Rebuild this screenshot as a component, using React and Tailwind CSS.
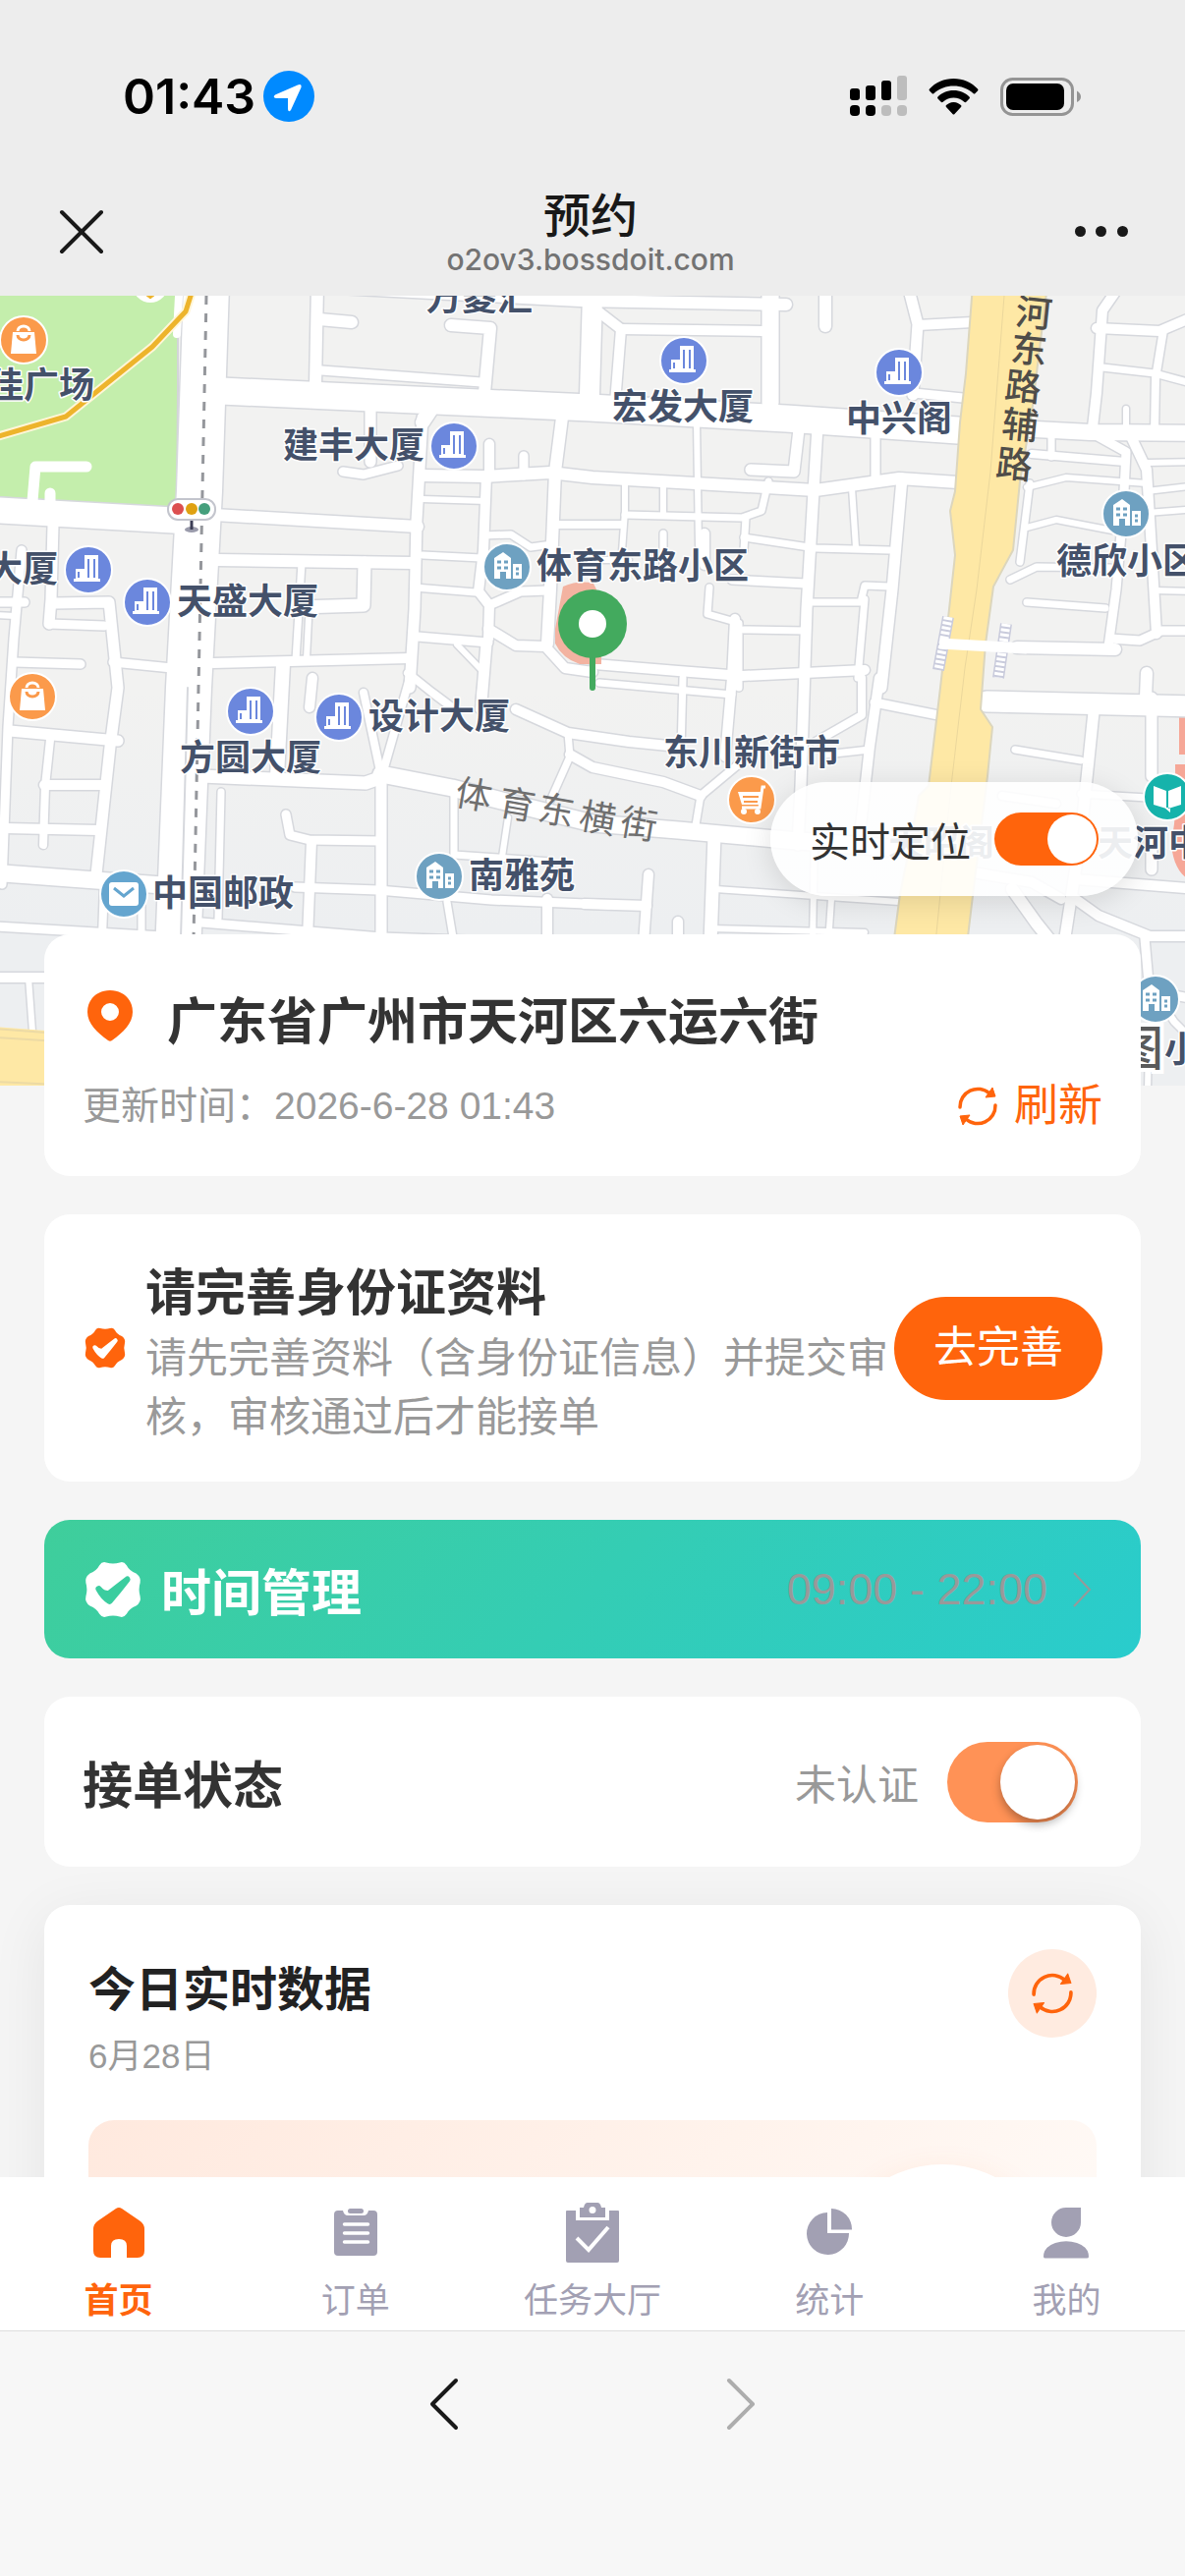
import React, { useState } from 'react';

const ROADS = [
  // main avenues
  [46, '210,290 203,500 192,700 181,970'],
  [26, '-10,519 185,530'],
  [27, '225,398 400,406 600,415 800,426 975,438'],
  [16, '1035,436 1110,440 1220,441'],
  [12, '218,524 425,536'],
  [12, '430,484 492,485 560,481 603,486 830,499 915,487 975,491'],
  [13, '205,790 372,797 392,790'],
  [17, '388,788 460,802 530,820 603,838 690,845 800,855 920,864'],
  [17, '-10,888 165,901'],
  // north blocks
  [12, '323,290 321,392'],
  [12, '325,325 358,328'],
  [12, '459,331 499,334 493,400'],
  [9, '327,377 490,389'],
  [12, '325,292 590,306 800,310'],
  [20, '603,300 600,402'],
  [10, '610,318 632,335'],
  [10, '632,335 776,337'],
  [10, '632,335 626,410'],
  [17, '784,300 784,410'],
  [12, '840,295 840,332'],
  [11, '925,295 934,330 929,402'],
  [10, '934,331 990,328'],
  [9, '930,400 980,405'],
  // centre blocks
  [11, '377,418 377,470'],
  [9, '349,480 370,483 405,474'],
  [14, '440,415 430,430'],
  [11, '430,425 424,530 422,620 417,700'],
  [8, '415,685 440,705 460,720'],
  [10, '498,452 498,484'],
  [9, '533,464 533,484'],
  [12, '572,425 565,480 560,600 557,655'],
  [6, '430,508 495,510'],
  [10, '495,484 492,560 487,602 498,616 497,650'],
  [9, '498,616 530,602 558,601'],
  [10, '497,640 525,657 555,658 575,680 603,684'],
  [7, '492,545 520,544 540,557 562,554'],
  [8, '565,534 632,534'],
  [7, '430,565 490,568'],
  [7, '422,598 484,603'],
  [9, '425,648 497,654'],
  [6, '465,656 490,682'],
  [11, '495,655 490,715'],
  [12, '222,570 420,573'],
  [7, '307,573 301,672'],
  [6, '314,630 312,670'],
  [13, '371,573 370,616 306,618'],
  [10, '217,675 417,670'],
  [14, '288,676 282,790'],
  [10, '318,690 315,720'],
  // west blocks
  [11, '54,534 52,610 50,635'],
  [11, '55,614 111,613 120,700 112,760 98,890'],
  [9, '50,635 106,637'],
  [9, '-5,613 25,613'],
  [6, '-5,626 15,627'],
  [9, '22,560 14,650 8,740 2,900'],
  [9, '15,674 82,676'],
  [9, '115,674 175,680'],
  [11, '10,744 120,754'],
  [8, '51,753 46,800 44,860'],
  [10, '45,799 105,799'],
  [10, '5,843 100,845'],
  [8, '106,900 104,953'],
  [7, '144,905 144,960'],
  [9, '-5,943 165,953'],
  [10, '-5,995 60,995'],
  [6, '29,995 33,1050'],
  // south blocks
  [7, '225,806 222,935'],
  [11, '388,790 388,958'],
  [9, '291,829 295,850 315,855 388,856'],
  [10, '317,856 313,955'],
  [9, '300,903 385,906 500,916 620,921'],
  [9, '205,939 388,954 560,960'],
  [7, '462,810 462,870 520,874 560,877'],
  [6, '517,832 511,872'],
  [7, '455,918 462,960'],
  [10, '557,915 557,960'],
  [8, '370,705 387,785'],
  [8, '417,690 390,785'],
  [10, '525,722 578,746 640,755 690,760'],
  [8, '490,700 488,722'],
  [7, '578,746 580,770 560,815'],
  [10, '580,768 603,781 675,796 713,810'],
  [8, '713,810 755,775'],
  [7, '713,810 708,840'],
  [7, '695,690 693,765'],
  [7, '610,695 745,707'],
  [10, '748,630 745,690 738,770'],
  [10, '895,690 885,760 875,850'],
  [8, '877,690 877,728 830,755'],
  [9, '890,715 960,729'],
  [7, '840,768 885,763'],
  [13, '727,850 723,960'],
  [6, '728,905 915,918'],
  [6, '723,945 880,949'],
  [6, '829,850 827,960'],
  [6, '846,915 843,960'],
  [10, '660,890 655,960'],
  [10, '595,920 658,922'],
  [10, '690,938 690,960'],
  // between the centre and the viaduct
  [6, '709,430 711,555'],
  [6, '636,490 636,520 632,575'],
  [6, '675,492 675,522'],
  [7, '636,524 755,527 775,520 782,490'],
  [7, '759,527 757,560'],
  [7, '757,547 830,558 905,560'],
  [11, '832,435 828,500 821,620 815,800 812,860'],
  [11, '918,487 908,600 897,700'],
  [9, '891,440 891,490'],
  [6, '867,497 871,557'],
  [11, '813,437 808,480 764,478'],
  [9, '745,590 820,594'],
  [7, '722,598 720,625 752,634 752,700'],
  [7, '757,641 820,642'],
  [7, '825,613 876,613 880,596 905,597'],
  [7, '880,610 873,690'],
  [10, '605,676 690,683 755,688 880,682'],
  [7, '675,543 675,575'],
  [10, '717,543 717,575'],
  [6, '600,570 640,570'],
  // east side
  [10, '1140,290 1122,316 1116,400 1112,435'],
  [10, '1116,334 1180,337 1220,320'],
  [8, '1184,336 1176,385 1175,440'],
  [7, '1122,374 1175,380 1220,392'],
  [6, '1146,416 1146,440'],
  [7, '1070,440 1070,465'],
  [8, '1050,462 1145,470'],
  [9, '1110,440 1146,460 1143,520 1136,600 1128,658'],
  [10, '1148,438 1167,478 1172,560 1177,645'],
  [6, '1167,471 1220,470'],
  [6, '1167,500 1220,494'],
  [6, '1167,522 1220,518'],
  [6, '1045,496 1085,486 1167,492'],
  [7, '1048,492 1038,572'],
  [6, '1045,537 1075,529 1132,540'],
  [7, '1028,590 1055,577 1130,578'],
  [7, '1045,613 1125,619'],
  [12, '1035,659 1135,661'],
  [9, '1130,650 1160,652 1182,642 1220,642'],
  [6, '1175,601 1220,602'],
  [12, '1167,685 1166,710'],
  [21, '1004,714 1220,719'],
  [11, '1113,725 1100,850 1083,960'],
  [7, '1033,763 1100,774'],
  [11, '1172,710 1172,790'],
  [11, '1172,860 1172,885'],
  [7, '1100,808 1220,815'],
  [8, '1020,810 1075,818'],
  [10, '990,888 1050,898 1080,915'],
  [12, '1030,905 1055,940 1075,965'],
  [10, '1094,895 1220,905'],
  [10, '1090,912 1118,932 1170,953 1220,953'],
  [9, '1165,955 1169,1000 1190,1012 1220,1018'],
  [7, '1175,1010 1195,1040 1215,1060'],
  [6, '1169,1060 1168,1110'],
];

const HIGHWAY =
  '990,290 983,380 977,430 972,500 967,520 972,565 966,620 957,700 945,800 935,810 928,850 916,910 908,970 983,970 989,920 1005,790 1010,740 998,722 1003,655 1011,597 1031,560 1038,490 1050,420 1066,290';

const LABELS = [
  ['万菱汇', 434, 316],
  ['佳广场', -12, 405],
  ['建丰大厦', 288, 466],
  ['宏发大厦', 623, 427],
  ['中兴阁', 861, 439],
  ['大厦', -13, 592],
  ['天盛大厦', 180, 625],
  ['体育东路小区', 546, 589],
  ['德欣小区', 1075, 584],
  ['方圆大厦', 183, 784],
  ['设计大厦', 375, 742],
  ['东川新街市', 675, 779],
  ['中国邮政', 155, 922],
  ['南雅苑', 477, 904],
  ['天昭阁', 904, 871],
  ['天河中', 1117, 871],
  ['小', 1185, 1081],
];

const POIS = [
  ['office', 462, 454],
  ['office', 90, 580],
  ['office', 150, 613],
  ['office', 696, 367],
  ['office', 915, 379],
  ['office', 255, 724],
  ['office', 345, 730],
  ['home', 516, 577],
  ['home', 1146, 523],
  ['home', 447, 892],
  ['home', 1176, 1017],
  ['bag', 24, 346],
  ['bag', 33, 709],
  ['cart', 765, 814],
  ['mail', 126, 910],
  ['book', 1188, 811],
];

const POI_COLORS = {
  office: '#6b87dd',
  home: '#6ea1c1',
  bag: '#fb9a4b',
  cart: '#fb9a4b',
  mail: '#64a5cf',
  book: '#16b3ab',
};

const PoiGlyph = ({ kind, color }) => {
  if (kind === 'office') {
    return (
      <g fill="#fff">
        <path d="M-15 9h27v3h-27zM-13-1h9v10h-9zM-4-15h14v24H-4z" />
        <path d="M-10 2v6M0-11v19M6-11v19" stroke={color} strokeWidth="2" />
      </g>
    );
  }
  if (kind === 'home') {
    return (
      <g>
        <path d="M-13-9L-4-15L4-9V12H-1V5H-7V12H-13zM6-3H15V12H6z" fill="#fff" />
        <path d="M-10-5h4M-3-5h4M-10 1h4M-3 1h4M9 2h3M9 7h3" stroke={color} strokeWidth="3" />
      </g>
    );
  }
  if (kind === 'bag') {
    return (
      <g>
        <path d="M-11-8H11L13 14H-13z" fill="#fff" />
        <path d="M-6-9a6 5 0 0 1 12 0" fill="none" stroke="#fff" strokeWidth="3" />
        <path d="M-6-5a6 5 0 0 0 12 0" fill="none" stroke={color} strokeWidth="3" />
      </g>
    );
  }
  if (kind === 'cart') {
    return (
      <g>
        <path d="M-14-8H10L8 5H-10z" fill="#fff" />
        <path d="M-9-3H7M-8 2H6" stroke={color} strokeWidth="2" />
        <path d="M14-13H11L8 8H-10" fill="none" stroke="#fff" strokeWidth="3" />
        <circle cx="-8" cy="12" r="3" fill="#fff" />
        <circle cx="6" cy="12" r="3" fill="#fff" />
      </g>
    );
  }
  if (kind === 'mail') {
    return (
      <g>
        <rect x="-15" y="-12" width="30" height="24" rx="3" fill="#fff" />
        <path d="M-10-6L0 2L10-6" fill="none" stroke={color} strokeWidth="3" />
      </g>
    );
  }
  return <path d="M-14-11L-1-6V12L-14 8zM14-11L1-6V12L14 8zM-3 11H3V16z" fill="#fff" />;
};

const CityMap = () => (
  <svg
    className="block h-full w-full"
    viewBox="0 301 1206 804"
    preserveAspectRatio="xMidYMid slice"
    role="img"
    aria-label="地图"
  >
    <defs>
      <linearGradient id="land" x1="0" y1="0" x2="0" y2="1">
        <stop offset="0.5" stopColor="#f2f2f1" />
        <stop offset="0.8" stopColor="#edeff1" />
      </linearGradient>
    </defs>
    <rect x="0" y="301" width="1206" height="804" fill="url(#land)" />
    <path d="M-5 295H181V396L180 517L-5 506z" fill="#c4eeac" stroke="#d3d5d8" strokeWidth="2" />
    <path d="M1200 730H1215V768H1200zM1196 778h20v120c-14-4-24-20-24-44c6-20 4-50 4-76z" fill="#f6a797" />

    <g fill="none" strokeLinejoin="round" strokeLinecap="round">
      {ROADS.map(([w, points]) => (
        <polyline key={points} points={points} stroke="#d6d8dd" strokeWidth={w + 3} />
      ))}
      {ROADS.map(([w, points]) => (
        <polyline key={points} points={points} stroke="#fff" strokeWidth={w} />
      ))}
      <path d="M88 475H36L33 510M51 502V520" stroke="#fff" strokeWidth="11" />
      <path d="M182 301L180 340" stroke="#fff" strokeWidth="8" />
      <path d="M-5 445L67 424L155 353L189 317L196 295" stroke="#fff6d8" strokeWidth="9" />
      <path d="M-5 445L67 424L155 353L189 317L196 295" stroke="#edb42c" strokeWidth="5" />
      <circle cx="153" cy="290" r="18" fill="#fff" />
      <path d="M148 300l5 4l5-4z" fill="#edb42c" stroke="#edb42c" />
      <path d="M191 700L184 955" stroke="#d6d8dd" strokeWidth="2" />
      <path d="M210 301L206 500L202 700L197 955" stroke="#95979c" strokeWidth="3" strokeDasharray="9 9" strokeLinecap="butt" />
    </g>

    <path d="M573 597Q590 590 604 594L612 610V676H590Q572 670 565 655V640z" fill="#f3b3a1" />

    <polygon points={HIGHWAY} fill="#fee8a5" stroke="#dcd6bd" strokeWidth="2" />
    <path d="M1022 301L1008 480L994 600L982 680L968 800L951 970" fill="none" stroke="#ebd79c" strokeWidth="1" />
    <path d="M-5 1045L60 1050V1105H-5z" fill="#fee8a5" />
    <path d="M-5 1047L60 1052M-5 1056L60 1060M-5 1101L60 1104" stroke="#ecdaa5" strokeWidth="2" />

    <path d="M965 628L955 682M1024 635L1016 690" stroke="#c9cbdc" strokeWidth="12" />
    <path d="M965 628L955 682M1024 635L1016 690" stroke="#fff" strokeWidth="9" strokeDasharray="3 2" />
    <path d="M956 655L1045 660" stroke="#fff" strokeWidth="11" />

    {POIS.map(([kind, x, y]) => (
      <g key={`${x}-${y}`} transform={`translate(${x} ${y})`}>
        <circle r="24" fill={POI_COLORS[kind]} stroke="#fff" strokeWidth="2" />
        <PoiGlyph kind={kind} color={POI_COLORS[kind]} />
      </g>
    ))}

    <ellipse cx="195" cy="539" rx="7" ry="3" fill="#9a9bab" />
    <path d="M195 528V539" stroke="#3b3d55" strokeWidth="3" />
    <rect x="171" y="508" width="48" height="21" rx="10" fill="#fff" stroke="#c3c5cd" strokeWidth="2" />
    <circle cx="181" cy="518" r="6" fill="#dc4f50" />
    <circle cx="195" cy="518" r="6" fill="#dfa112" />
    <circle cx="208" cy="518" r="6" fill="#459f7c" />

    <g
      className='font-["Noto_Sans_CJK_SC",sans-serif] font-bold'
      fontSize="36"
      fill="#44516a"
      stroke="#fff"
      strokeWidth="3"
      strokeLinejoin="round"
      paintOrder="stroke"
    >
      {LABELS.map(([name, x, y]) => (
        <text key={name} x={x} y={y}>{name}</text>
      ))}
    </g>

    <g className='font-["Noto_Sans_CJK_SC",sans-serif]' fontSize="37" textAnchor="middle">
      <g className="font-medium" fill="#4f4d49">
        <text transform="translate(1051 332) rotate(6)">河</text>
        <text transform="translate(1046 369) rotate(6)">东</text>
        <text transform="translate(1040 407) rotate(6)">路</text>
        <text transform="translate(1037 446) rotate(6)">辅</text>
        <text transform="translate(1031 486) rotate(6)">路</text>
      </g>
      <g fill="#6f6f6f">
        <text transform="translate(480 822) rotate(10)">体</text>
        <text transform="translate(524 832) rotate(10)">育</text>
        <text transform="translate(564 838) rotate(10)">东</text>
        <text transform="translate(606 846) rotate(10)">横</text>
        <text transform="translate(648 852) rotate(10)">街</text>
      </g>
      <text
        className="font-medium"
        x="1160"
        y="1084"
        fontSize="48"
        fill="#5a5a5a"
        stroke="#fff"
        strokeWidth="8"
        paintOrder="stroke"
      >
        图
      </text>
    </g>

    <path d="M603 660V700" stroke="#43aa5e" strokeWidth="6" strokeLinecap="round" />
    <circle cx="603" cy="635" r="35" fill="#43aa5e" />
    <circle cx="603" cy="635" r="14" fill="#fff" />
  </svg>
);

const RefreshIcon = ({ className }) => (
  <svg className={className} viewBox="0 0 40 40" fill="none" aria-hidden="true">
    <path d="M2 21A18 18 0 0 1 32 7" stroke="currentColor" strokeWidth="3.5" strokeLinecap="round" />
    <path d="M35 1L38 10L28 11z" fill="currentColor" stroke="currentColor" strokeLinejoin="round" />
    <path d="M38 19A18 18 0 0 1 8 33" stroke="currentColor" strokeWidth="3.5" strokeLinecap="round" />
    <path d="M5 39L2 30L12 29z" fill="currentColor" stroke="currentColor" strokeLinejoin="round" />
  </svg>
);

const BadgeIcon = ({ className, check }) => (
  <svg className={className} viewBox="0 0 42 42" aria-hidden="true">
    <path
      fill="currentColor"
      d="M11 3Q13 0 16 1Q21 2.5 26 1Q29 0 31 3Q33 7 38 9Q42 12 41 16Q39.5 21 41 26Q42 30 38 33Q33 35 31 39Q29 42 26 41Q21 39.5 16 41Q13 42 11 39Q9 35 4 33Q0 30 1 26Q2.5 21 1 16Q0 12 4 9Q9 7 11 3Z"
    />
    <path
      d="M10.5 20.5Q14 24.5 18 24Q23 20 31.5 13.5Q25 22 18.5 29.5Q14 27 10.5 20.5Z"
      fill={check}
      stroke={check}
      strokeWidth="4.5"
      strokeLinejoin="round"
    />
  </svg>
);

const StatusBar = () => (
  <div className="flex items-center justify-between pt-[72px] pr-[106px] pl-[125px]">
    <div className="flex items-center gap-2">
      <span className="font-[Inter,sans-serif] text-[50px] leading-[52px] font-semibold text-black">01:43</span>
      <svg className="size-[52px]" viewBox="0 0 52 52" aria-hidden="true">
        <circle cx="26" cy="26" r="26" fill="#008aff" />
        <path d="M37 14Q39 14 38.5 17L28 40Q25.5 43 25 39V28H13Q9 27 12 24.5L35 14.5z" fill="#fff" />
      </svg>
    </div>
    <div className="flex items-center gap-[22px]">
      <svg className="h-[42px] w-[58px]" viewBox="0 0 58 42" aria-hidden="true">
        <rect x="0" y="13" width="10" height="12" rx="3" />
        <rect x="16" y="10" width="10" height="15" rx="3" />
        <rect x="32" y="5" width="10" height="20" rx="3" />
        <rect x="48" y="0" width="10" height="25" rx="3" fill="#bdbdbd" />
        <rect x="0" y="30" width="10" height="11" rx="4" />
        <rect x="16" y="30" width="10" height="11" rx="4" />
        <rect x="32" y="30" width="10" height="11" rx="4" fill="#bdbdbd" />
        <rect x="48" y="30" width="10" height="11" rx="4" fill="#bdbdbd" />
      </svg>
      <svg className="h-[37px] w-[51px]" viewBox="0 0 51 37" aria-hidden="true">
        <path d="M25.5 0C35 0 44 4 50 10.5Q51 11.5 50 12.5L47.5 15Q46.5 16 45.5 15C40 10 33 7.5 25.5 7.5S11 10 5.5 15Q4.5 16 3.5 15L1 12.5Q0 11.5 1 10.5C7 4 16 0 25.5 0z" />
        <path d="M25.5 12C32 12 37.5 14.5 41.5 18.5Q42.5 19.5 41.5 20.5L38 24Q37 24.5 36 23.5C33 21 29.5 19.5 25.5 19.5S18 21 15 23.5Q14 24.5 13 24L9.5 20.5Q8.5 19.5 9.5 18.5C13.5 14.5 19 12 25.5 12z" />
        <path d="M25.5 24C29 24 31 25.5 33 27Q34 28 33 29L26.5 36Q25.5 37 24.5 36L18 29Q17 28 18 27C20 25.5 22 24 25.5 24z" />
      </svg>
      <svg className="h-[39px] w-[82px]" viewBox="0 0 82 39" aria-hidden="true">
        <rect x="1.5" y="1.5" width="72" height="36" rx="11" fill="none" stroke="#949494" strokeWidth="3" />
        <rect x="6" y="6" width="59" height="27" rx="7" />
        <path d="M78 13.5Q82 16 82 19.5T78 25z" fill="#949494" />
      </svg>
    </div>
  </div>
);

const TitleBar = () => (
  <div className="mt-[66px] flex h-[111px] items-center justify-between px-[58px] pb-[20px]">
    <button type="button" aria-label="关闭" className="size-[50px]">
      <svg viewBox="0 0 50 50" fill="none" stroke="#191919" strokeWidth="4" strokeLinecap="round">
        <path d="M5 5L45 45M45 5L5 45" />
      </svg>
    </button>
    <div className="text-center">
      <h1 className='font-["Noto_Sans_CJK_SC",sans-serif] text-[48px] leading-[52px] font-medium text-[#191919]'>预约</h1>
      <p className="mt-1 font-[Inter,sans-serif] text-[30px] leading-[36px] font-medium text-[#737373]">
        o2ov3.bossdoit.com
      </p>
    </div>
    <button type="button" aria-label="更多" className="flex w-[54px] items-center justify-between">
      <span className="size-[11px] rounded-full bg-[#191919]" />
      <span className="size-[11px] rounded-full bg-[#191919]" />
      <span className="size-[11px] rounded-full bg-[#191919]" />
    </button>
  </div>
);

const LocateToggle = () => {
  const [on, setOn] = useState(true);

  return (
    <label className='absolute right-[48px] bottom-[193px] flex h-[116px] items-center gap-6 rounded-full bg-white/90 px-10 font-["Noto_Sans_CJK_SC",sans-serif] text-[41px] leading-[60px] text-[#333] shadow-[0_6px_30px_rgba(0,0,0,0.12)]'>
      实时定位
      <input
        type="checkbox"
        role="switch"
        checked={on}
        onChange={() => setOn(!on)}
        className="h-[54px] w-[106px] appearance-none rounded-full bg-[#ddd] p-[2px] before:block before:size-[50px] before:rounded-full before:bg-white checked:bg-[#ff640c] checked:before:ml-auto"
      />
    </label>
  );
};

const LocationCard = () => (
  <section className="relative -mt-[154px] rounded-[26px] bg-white p-[39px]">
    <div className="flex h-[92px] items-center">
      <svg className="mx-[5px] mb-[4px] h-[52px] w-[46px]" viewBox="0 0 46 52" aria-hidden="true">
        <path
          fillRule="evenodd"
          fill="#ff640c"
          d="M23 0C36 0 46 9 46 22C46 34 36 43 25 51Q23 52.5 21 51C10 43 0 34 0 22C0 9 10 0 23 0zM23 13a9 9 0 1 0 0 18a9 9 0 0 0 0-18z"
        />
      </svg>
      <h2 className='ml-[30px] font-["Noto_Sans_CJK_SC",sans-serif] text-[51px] leading-[74px] font-bold text-[#333]'>
        广东省广州市天河区六运六街
      </h2>
    </div>
    <div className="flex items-center justify-between pt-3">
      <p className="text-[39px] leading-[64px] text-[#999]">更新时间：2026-6-28 01:43</p>
      <button type="button" className="flex items-center gap-[17px] text-[45px] leading-[64px] text-[#ff640c]">
        <RefreshIcon className="size-10" />
        刷新
      </button>
    </div>
  </section>
);

const IdentityCard = () => (
  <section className="flex items-center rounded-[26px] bg-white p-[39px]">
    <BadgeIcon className="mx-[2px] size-[42px] shrink-0 text-[#ff640c]" check="#fff" />
    <div className='ml-[18px] flex-1 font-["Noto_Sans_CJK_SC",sans-serif]'>
      <h2 className="text-[51px] leading-[74px] font-bold text-[#333]">请完善身份证资料</h2>
      <p className="text-[42px] leading-[60px] text-[#999]">请先完善资料（含身份证信息）并提交审核，审核通过后才能接单</p>
    </div>
    <button type="button" className="h-[105px] w-[212px] shrink-0 rounded-full bg-[#ff640c] text-[44px] text-white">
      去完善
    </button>
  </section>
);

const TimeCard = () => (
  <a
    href="#time"
    className="flex h-[141px] items-center rounded-[26px] bg-linear-[135deg] from-[#3fce9b] to-[#29cccd] px-[41px]"
  >
    <BadgeIcon className="size-[58px] text-white" check="#3bcd9f" />
    <span className='ml-5 font-["Noto_Sans_CJK_SC",sans-serif] text-[51px] leading-[74px] font-bold text-white'>
      时间管理
    </span>
    <span className="ml-auto text-[45px] text-[#999]">09:00 - 22:00</span>
    <svg className="mr-[9px] ml-[26px] h-[36px] w-[19px]" viewBox="0 0 19 36" fill="none" stroke="#999" strokeWidth="2" aria-hidden="true">
      <path d="M1 1L17 18L1 35" />
    </svg>
  </a>
);

const OrderStatusCard = () => {
  const [on, setOn] = useState(true);

  return (
    <section className='flex h-[173px] items-center justify-between rounded-[26px] bg-white pr-[64px] pl-[39px] font-["Noto_Sans_CJK_SC",sans-serif]'>
      <h2 className="text-[51px] leading-[74px] font-bold text-[#333]">接单状态</h2>
      <label className="flex items-center gap-[29px] text-[42px] leading-[60px] text-[#999]">
        未认证
        <input
          type="checkbox"
          role="switch"
          checked={on}
          onChange={() => setOn(!on)}
          className="h-[82px] w-[133px] appearance-none rounded-full bg-[#ddd] p-[3px] before:block before:size-[76px] before:rounded-full before:bg-white before:shadow-[0_5px_10px_rgba(0,0,0,0.3)] checked:bg-[#ff9256] checked:before:ml-auto"
        />
      </label>
    </section>
  );
};

const TodayCard = () => (
  <section className="rounded-[26px] bg-white p-[45px] shadow-[0_12px_60px_rgba(0,0,0,0.07)]">
    <div className="flex items-start justify-between">
      <div>
        <h2 className='font-["Noto_Sans_CJK_SC",sans-serif] text-[48px] leading-[74px] font-bold text-[#222]'>
          今日实时数据
        </h2>
        <p className="text-[35px] leading-[70px] text-[#999]">6月28日</p>
      </div>
      <button
        type="button"
        aria-label="刷新数据"
        className="flex size-[90px] items-center justify-center rounded-full bg-[#ffebe0] text-[#ff640c]"
      >
        <RefreshIcon className="size-[42px]" />
      </button>
    </div>
    <div className="mt-[30px] flex h-[320px] justify-end rounded-[26px] bg-linear-[135deg] from-[#ffe9de] via-[#fff3ec] to-[#fffdfb] pt-[45px] pr-[39px]">
      <div className="size-[236px] rounded-full bg-white shadow-[0_4px_30px_rgba(255,100,12,0.08)]" />
    </div>
  </section>
);

const HomeIcon = () => (
  <path d="M27 4Q30 2 33 4L52 17Q56 20 56 25V47Q56 54 49 54H38V42Q38 35 30 35T22 42V54H11Q4 54 4 47V25Q4 20 8 17z" />
);

const OrderIcon = () => (
  <>
    <path d="M12 6H17Q18 11 22 11H38Q42 11 43 6H48Q52 6 52 10V48Q52 52 48 52H12Q8 52 8 48V10Q8 6 12 6z" />
    <rect x="22" y="4" width="16" height="5" rx="2.5" />
    <path d="M18.5 20H42.5M18.5 29H42.5M18.5 38H42.5" stroke="#fff" strokeWidth="3.5" strokeLinecap="round" />
  </>
);

const TaskIcon = () => (
  <>
    <path d="M4 6H13V16H47V6H56Q57 6 57 7V57Q57 59 55 59H5Q3 59 3 57V7Q3 6 4 6z" />
    <path fillRule="evenodd" d="M17 3H21Q22-2 25-2H35Q38-2 39 3H43V13H17zM30 2a3 3 0 1 0 0 7a3 3 0 0 0 0-7z" />
    <path d="M14 34L26 46L46 23" fill="none" stroke="#fff" strokeWidth="4" />
  </>
);

const StatsIcon = () => <path d="M28 8V29H50A21.5 21.5 0 1 1 28 8zM32 4A21 21 0 0 1 53 25.5H32z" />;

const MineIcon = () => (
  <path d="M30 3H45V18A15 15 0 1 1 30 3zM19 39Q30 35.5 41 39Q53 43 53 53Q53 54.5 51 54.5H9Q7 54.5 7 53Q7 43 19 39z" />
);

const TABS = [
  { name: '首页', Icon: HomeIcon, active: true },
  { name: '订单', Icon: OrderIcon },
  { name: '任务大厅', Icon: TaskIcon },
  { name: '统计', Icon: StatsIcon },
  { name: '我的', Icon: MineIcon },
];

const TabBar = () => (
  <nav className='flex border-b border-[#dedede] bg-white font-["Noto_Sans_CJK_SC",sans-serif]'>
    {TABS.map(({ name, Icon, active }) => (
      <a
        key={name}
        href={`#${name}`}
        className={`flex h-[156px] flex-1 flex-col items-center pt-[28px] text-[35px] ${
          active ? 'font-bold text-[#ff640c]' : 'text-[#a2a0b3]'
        }`}
      >
        <svg className="size-[60px] overflow-visible" viewBox="0 0 60 60" fill="currentColor" aria-hidden="true">
          <Icon />
        </svg>
        <span className="mt-[10px] leading-[50px]">{name}</span>
      </a>
    ))}
  </nav>
);

const BrowserBar = () => (
  <footer className="flex h-[249px] justify-center gap-[242px] bg-[#f7f7f7] pt-[44px]">
    <button type="button" aria-label="后退" className="size-[60px] text-[#191919]">
      <svg viewBox="0 0 60 60" fill="none" stroke="currentColor" strokeWidth="4">
        <path d="M42 6L18 30L42 54" strokeLinecap="round" strokeLinejoin="round" />
      </svg>
    </button>
    <button type="button" aria-label="前进" disabled className="size-[60px] text-[#adadad]">
      <svg viewBox="0 0 60 60" fill="none" stroke="currentColor" strokeWidth="4">
        <path d="M18 6L42 30L18 54" strokeLinecap="round" strokeLinejoin="round" />
      </svg>
    </button>
  </footer>
);

const App = () => (
  <div className='flex h-screen flex-col bg-[#f5f5f5] font-["Liberation_Sans","Noto_Sans_CJK_SC",sans-serif]'>
    <header className="shrink-0 bg-[#ededed]">
      <StatusBar />
      <TitleBar />
    </header>
    <main className="min-h-0 flex-1 overflow-y-auto [scrollbar-width:none]">
      <div className="relative aspect-[3/2] w-full">
        <CityMap />
        <LocateToggle />
      </div>
      <div className="flex flex-col gap-[39px] px-[45px] pb-10">
        <LocationCard />
        <IdentityCard />
        <TimeCard />
        <OrderStatusCard />
        <TodayCard />
      </div>
    </main>
    <TabBar />
    <BrowserBar />
  </div>
);

export default App;
